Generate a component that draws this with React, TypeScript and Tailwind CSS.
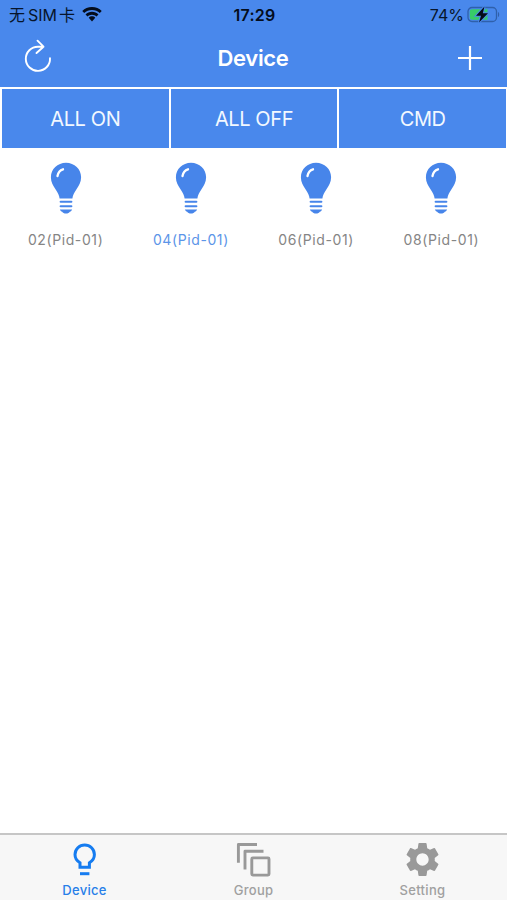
import { MdSettings } from "react-icons/md";

const devices = [
  { name: "02(Pid-01)", active: false },
  { name: "04(Pid-01)", active: true },
  { name: "06(Pid-01)", active: false },
  { name: "08(Pid-01)", active: false },
];

const actions = ["ALL ON", "ALL OFF", "CMD"];

const WifiIcon = () => (
  <svg width="20" height="15" viewBox="0 0 21 15" preserveAspectRatio="none" fill="#040d1c">
    <path d="M10.500 0C6.400 0 2.800 1.500.3 4l2 2.100C4.500 4.200 7.300 3.100 10.500 3.100S16.500 4.200 18.700 6.100l2-2.100C18.200 1.500 14.600 0 10.500 0Z" />
    <path d="M10.500 4.700c-2.700 0-5 1-6.800 2.700l2.100 2.200c1.200-1.200 2.800-1.900 4.700-1.900s3.500.7 4.700 1.900l2.100-2.200c-1.800-1.700-4.100-2.700-6.800-2.700Z" />
    <path d="M10.500 9.300c-1.300 0-2.500.5-3.400 1.400l3.400 3.800 3.400-3.800c-.9-.9-2.100-1.400-3.400-1.400Z" />
  </svg>
);

const BatteryIcon = () => (
  <svg width="33" height="18" viewBox="0 0 33 18">
    <rect x="1" y="1.500" width="28.500" height="14" rx="4" fill="none" stroke="#2f60ab" strokeWidth="1.300" />
    <path d="M31 6c1.600.5 1.600 4.500 0 5Z" fill="#2f60ab" />
    <path d="M5.100 3.300H20.500v10.400H5.100a2.300 2.300 0 0 1-2.300-2.300V5.600a2.300 2.300 0 0 1 2.300-2.300Z" fill="#37cc68" />
    <path d="M17.500.5 9 9.700h5L12 16.500l9-9.300h-5.200Z" fill="#050d18" stroke="#4988ec" strokeWidth="2" paintOrder="stroke" />
  </svg>
);

const RefreshIcon = () => (
  <svg width="28" height="34" viewBox="0 0 28 34" fill="none" stroke="#fff" strokeWidth="1.900" strokeLinecap="round" strokeLinejoin="round">
    <path d="M26 19.200A12.100 12.100 0 1 1 14 7.700h5.500M13.500 1.700l6 6-7 6.300" />
  </svg>
);

const BulbIcon = () => (
  <svg width="32" height="52" viewBox="0 0 32 52">
    <path
      d="M16 .8C7.500.8.900 7.200.900 15.200c0 5 2.200 8.300 4.600 12 2.300 3.600 3.800 6 4.100 9.400h12.800c.3-3.400 1.800-5.800 4.100-9.400 2.400-3.700 4.600-7 4.600-12C31.100 7.200 24.500.8 16 .8Z"
      fill="#4785ea"
    />
    <path d="M7.500 14c.6-3.600 2.300-5.700 5.500-6.700" fill="none" stroke="#fff" strokeWidth="2.300" strokeLinecap="round" />
    <path d="M10.600 39.700h10.800M10.600 44.200h10.800" stroke="#4785ea" strokeWidth="2" strokeLinecap="round" />
    <path d="M9.900 47.400h12.200c-.4 1.300-1.300 1.900-2.300 2.300-.6 1.100-1.900 1.900-3.800 1.900s-3.200-.8-3.800-1.900c-1-.4-1.900-1-2.300-2.300Z" fill="#4785ea" />
  </svg>
);

const DeviceTabIcon = () => (
  <svg width="36" height="36" viewBox="0 0 36 36" fill="none" stroke="#167cf0" strokeWidth="3">
    <path d="M13 25.300v-4.500C9.800 19 8 16.300 8 12.600a9.700 9.700 0 0 1 19.400 0c0 3.700-1.800 6.400-5 8.200v4.500Z" />
    <path d="M13 31.700h9.400" />
  </svg>
);

const GroupTabIcon = () => (
  <svg width="36" height="36" viewBox="0 0 36 36" fill="none" stroke="#999" strokeWidth="2.900" strokeLinejoin="round">
    <path d="M2.400 20.800V2.500h18.600M9 27.600V9.200h18.500" />
    <rect x="15.800" y="15.900" width="17.200" height="17.200" rx="1" />
  </svg>
);

const App = () => {
  return (
    <div className="flex h-[900px] w-[507px] flex-col overflow-hidden bg-white font-[Inter,'Noto_Sans_CJK_SC',sans-serif]">
      {/* Status bar */}
      <div className="grid h-[30px] grid-cols-3 items-center bg-[#4988ec] pr-[7px] pb-px pl-[9px] text-base leading-none text-[#07152b]">
        <div className="flex items-center">
          <span className="whitespace-nowrap">无</span>
          <span className="ml-[3px]">SIM</span>
          <span className="ml-[2px]">卡</span>
          <span className="ml-[7px]">
            <WifiIcon />
          </span>
        </div>
        <div className="text-center font-semibold tracking-[0.2px] text-[#040d1c]">17:29</div>
        <div className="flex items-center justify-end gap-[3px]">
          <span>74%</span>
          <BatteryIcon />
        </div>
      </div>

      {/* Navigation bar */}
      <header className="grid h-[57px] grid-cols-3 items-center bg-[#4988ec] pr-[25px] pb-[2px] pl-[24px] text-white">
        <div className="pb-[4px]">
          <RefreshIcon />
        </div>
        <h1 className="text-center text-[22px] leading-none font-semibold tracking-[-0.3px]">Device</h1>
        <div className="flex justify-end">
          <svg width="24" height="24" viewBox="0 0 24 24" stroke="#fff" strokeWidth="2.200">
            <path d="M12 0v24M0 12h24" />
          </svg>
        </div>
      </header>

      {/* Actions */}
      <div className="mt-[2px] grid h-[59px] grid-cols-3 gap-[2px] pr-px pl-[2px]">
        {actions.map((action) => (
          <button key={action} className="bg-[#4988ec] text-xl leading-none tracking-[-0.4px] text-[#f2f8ff]">
            {action}
          </button>
        ))}
      </div>

      {/* Device list */}
      <main className="grid flex-1 grid-cols-4 content-start px-[3px] pt-[14px]">
        {devices.map((device) => (
          <div key={device.name} className="flex flex-col items-center">
            <BulbIcon />
            <span
              className={
                device.active
                  ? "mt-[18px] text-[14px] leading-4 tracking-[0.6px] text-[#5c95e8]"
                  : "mt-[18px] text-[14px] leading-4 tracking-[0.6px] text-[#858585]"
              }
            >
              {device.name}
            </span>
          </div>
        ))}
      </main>

      {/* Tab bar */}
      <nav className="grid h-[67px] grid-cols-3 border-t-2 border-[#c6c6c6] bg-[#f7f7f7] text-[13px] leading-none font-medium tracking-[0.3px] text-[#a0a0a0]">
        <div className="flex flex-col items-center pt-[7px] text-[#287fe9]">
          <DeviceTabIcon />
          <span className="mt-[6px]">Device</span>
        </div>
        <div className="flex flex-col items-center pt-[7px]">
          <GroupTabIcon />
          <span className="mt-[6px]">Group</span>
        </div>
        <div className="flex flex-col items-center pt-[4px]">
          <MdSettings size={41} className="text-[#999]" />
          <span className="mt-[4px]">Setting</span>
        </div>
      </nav>
    </div>
  );
};

export default App;
